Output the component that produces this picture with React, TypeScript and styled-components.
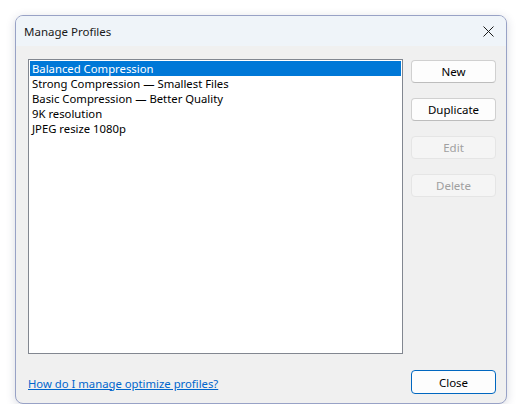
import React, { useState } from "react";
import styled, { createGlobalStyle } from "styled-components";

const Global = createGlobalStyle`
  html, body { margin: 0; padding: 0; background: #ffffff; }
  body { font-family: "Noto Sans", "Segoe UI", sans-serif; font-size: 11.3px; color: #000; }
`;

const Page = styled.div`
  padding: 15px 0 0 15px;
`;

const Window = styled.div`
  width: 490px;
  height: 387px;
  border: 1px solid #98a2c6;
  border-radius: 8px;
  overflow: hidden;
  display: flex;
  flex-direction: column;
  background: #f0f0f0;
  box-shadow: 0 2px 10px rgba(40, 50, 90, 0.18);
`;

const TitleBar = styled.div`
  height: 30px;
  flex: none;
  display: flex;
  align-items: center;
  justify-content: space-between;
  padding: 0 11px 0 8px;
  background: #eff4f9;
`;

const Title = styled.span`
  font-size: 11.5px;
  color: #1a1a1a;
`;

const CloseGlyph = styled.button`
  width: 14px;
  height: 14px;
  padding: 0;
  border: none;
  background: transparent;
  display: flex;
  align-items: center;
  justify-content: center;
`;

const Body = styled.div`
  flex: 1;
  display: flex;
  flex-direction: column;
  padding: 13px 10px 11px 12px;
`;

const MainRow = styled.div`
  display: flex;
  gap: 8px;
`;

const ListBox = styled.ul`
  list-style: none;
  margin: 0;
  padding: 1px;
  width: 373px;
  height: 291px;
  border: 1px solid #828790;
  background: #ffffff;
`;

const ListItem = styled.li<{ $selected?: boolean }>`
  height: 15px;
  line-height: 15px;
  padding-left: 2px;
  font-size: 11.3px;
  white-space: nowrap;
  overflow: hidden;
  background: ${(p) => (p.$selected ? "#0078d7" : "transparent")};
  color: ${(p) => (p.$selected ? "#ffffff" : "#000000")};
  cursor: default;
`;

const ButtonColumn = styled.div`
  display: flex;
  flex-direction: column;
  gap: 15px;
  margin-top: 1px;
`;

const DialogButton = styled.button<{ $default?: boolean }>`
  width: 85px;
  height: 23px;
  box-sizing: border-box;
  font-family: inherit;
  font-size: 11.5px;
  padding: 0;
  border-radius: 4px;
  background: #fdfdfd;
  color: #000;
  border: 1px solid ${(p) => (p.$default ? "#0067c0" : "#d0d0d0")};
  border-bottom-color: ${(p) => (p.$default ? "#0067c0" : "#bdbdbd")};
  &:disabled {
    background: #f5f5f5;
    border-color: #e5e5e5;
    color: #a0a0a0;
  }
`;

const Footer = styled.div`
  margin-top: 16px;
  display: flex;
  align-items: center;
  justify-content: space-between;
`;

const HelpLink = styled.a`
  color: #0066cc;
  font-size: 11.3px;
  text-decoration: underline;
  margin-top: 2px;
  cursor: pointer;
`;

const items = [
  "Balanced Compression",
  "Strong Compression — Smallest Files",
  "Basic Compression — Better Quality",
  "9K resolution",
  "JPEG resize 1080p",
];

export default function App() {
  const [sel, setSel] = useState(0);
  return (
    <>
      <Global />
      <Page>
        <Window>
          <TitleBar>
            <Title>Manage Profiles</Title>
            <CloseGlyph aria-label="Close">
              <svg width="11" height="11" viewBox="0 0 11 11">
                <path d="M0.5 0.5 L10.5 10.5 M10.5 0.5 L0.5 10.5" stroke="#1a1a1a" strokeWidth="1" />
              </svg>
            </CloseGlyph>
          </TitleBar>
          <Body>
            <MainRow>
              <ListBox>
                {items.map((t, i) => (
                  <ListItem key={t} $selected={i === sel} onClick={() => setSel(i)}>
                    {t}
                  </ListItem>
                ))}
              </ListBox>
              <ButtonColumn>
                <DialogButton>New</DialogButton>
                <DialogButton>Duplicate</DialogButton>
                <DialogButton disabled>Edit</DialogButton>
                <DialogButton disabled>Delete</DialogButton>
              </ButtonColumn>
            </MainRow>
            <Footer>
              <HelpLink>How do I manage optimize profiles?</HelpLink>
              <DialogButton $default style={{ height: 24 }}>Close</DialogButton>
            </Footer>
          </Body>
        </Window>
      </Page>
    </>
  );
}
